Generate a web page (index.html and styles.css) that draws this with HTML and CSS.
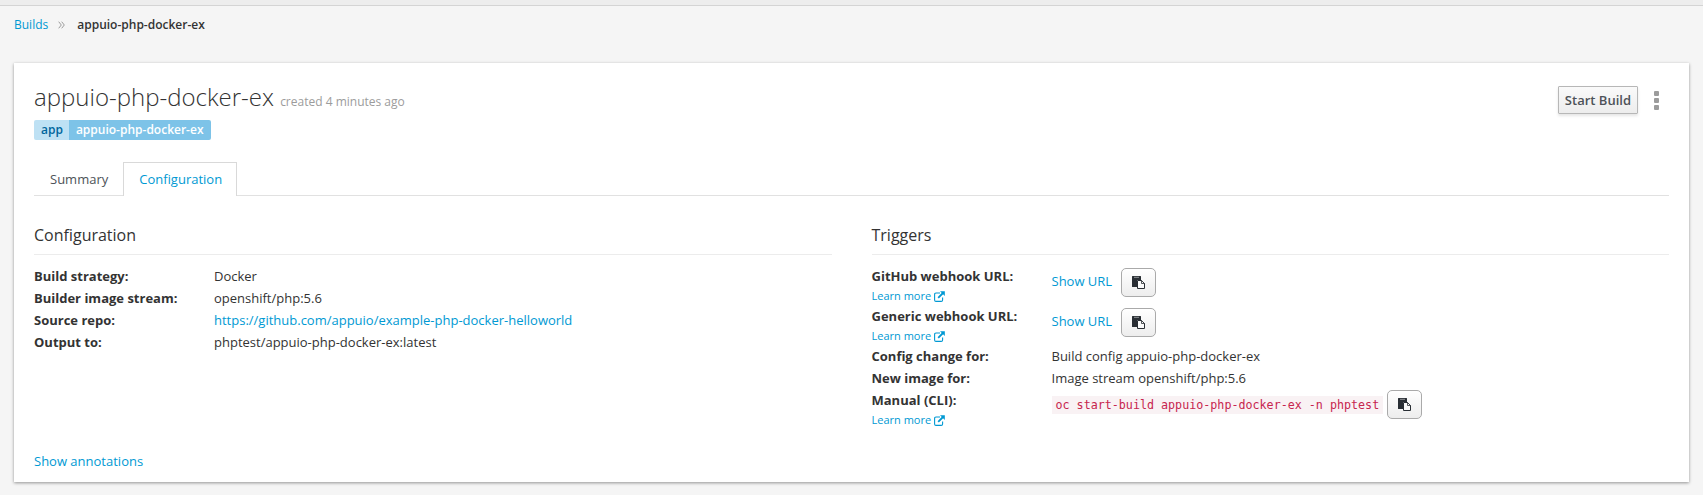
FILE: index.html
```html
<!DOCTYPE html>
<html lang="en">
<head>
<meta charset="utf-8">
<title>appuio-php-docker-ex</title>
<link rel="stylesheet" href="styles.css">
</head>
<body>
<svg class="sprite" aria-hidden="true">
  <symbol id="external" viewBox="0 0 11 11"><path d="M6 2H2Q.6 2 .6 3.400V9Q.6 10.400 2 10.400H7.200Q8.600 10.400 8.600 9V6.500" fill="none" stroke="currentColor" stroke-width="1.100"/><path d="M4.200 6.800 9 2" stroke="currentColor" stroke-width="1.800"/><path d="M6 .2H10.800V5Z" fill="currentColor"/></symbol>
  <symbol id="paste" viewBox="0 0 13 13"><path fill="currentColor" d="M.5 0H8.500Q9 0 9 .5V4H5V11H.5Q0 11 0 10.500V.5Q0 0 .5 0Z"/><path d="M2 1.300H7" stroke="#fff" stroke-width=".5"/><path d="M5.500 4.500H9.500L12.500 7.500V12.500H5.500Z" fill="#fafafa" stroke="currentColor"/><path d="M9.500 4.500V7.500H12.500Z" fill="#fafafa" stroke="currentColor" stroke-width=".8"/></symbol>
</svg>
<div class="topbar"></div>
<nav class="breadcrumb" aria-label="Breadcrumb">
  <a href="#">Builds</a>
  <svg class="chevrons" viewBox="0 0 7 8" aria-hidden="true"><path d="M.7.7 3.300 4 .7 7.300M3.700.7 6.300 4 3.700 7.300"/></svg>
  <strong>appuio-php-docker-ex</strong>
</nav>
<main class="card">
  <header class="header">
    <div>
      <h1>appuio-php-docker-ex <small>created 4 minutes ago</small></h1>
      <div class="label"><span class="label-key">app</span><span class="label-value">appuio-php-docker-ex</span></div>
    </div>
    <div class="actions">
      <button class="start" type="button">Start Build</button>
      <button class="kebab" type="button" aria-label="More actions"><svg viewBox="0 0 5 19"><rect width="5" height="5" rx="1"/><rect y="7" width="5" height="5" rx="1"/><rect y="14" width="5" height="5" rx="1"/></svg></button>
    </div>
  </header>
  <nav class="tabs" aria-label="Build views">
    <a class="tab" href="#">Summary</a>
    <a class="tab active" href="#" aria-current="page">Configuration</a>
  </nav>
  <div class="columns">
    <section>
      <h2>Configuration</h2>
      <dl>
        <dt>Build strategy:</dt><dd>Docker</dd>
        <dt>Builder image stream:</dt><dd>openshift/php:5.6</dd>
        <dt>Source repo:</dt><dd><a href="#">https://github.com/appuio/example-php-docker-helloworld</a></dd>
        <dt>Output to:</dt><dd>phptest/appuio-php-docker-ex:latest</dd>
      </dl>
    </section>
    <section>
      <h2>Triggers</h2>
      <dl>
        <dt>GitHub webhook URL: <a class="learn" href="#">Learn more <svg><use href="#external"/></svg></a></dt>
        <dd class="url"><a href="#">Show URL</a><button class="copy" type="button" aria-label="Copy GitHub URL"><svg><use href="#paste"/></svg></button></dd>
        <dt>Generic webhook URL: <a class="learn" href="#">Learn more <svg><use href="#external"/></svg></a></dt>
        <dd class="url"><a href="#">Show URL</a><button class="copy" type="button" aria-label="Copy generic URL"><svg><use href="#paste"/></svg></button></dd>
        <dt>Config change for:</dt><dd>Build config appuio-php-docker-ex</dd>
        <dt>New image for:</dt><dd>Image stream openshift/php:5.6</dd>
        <dt>Manual (CLI): <a class="learn" href="#">Learn more <svg><use href="#external"/></svg></a></dt>
        <dd class="command"><code>oc start-build appuio-php-docker-ex -n phptest</code><button class="copy" type="button" aria-label="Copy command"><svg><use href="#paste"/></svg></button></dd>
      </dl>
    </section>
  </div>
  <a class="annotations" href="#">Show annotations</a>
</main>
</body>
</html>
```
FILE: styles.css
```css
* { box-sizing: border-box; }
body { margin: 0; background: #f5f5f5; color: #333; font: 13px/22px "Open Sans", sans-serif; }
a { color: #0099d3; text-decoration: none; }
button { padding: 0; font: inherit; cursor: pointer; }
.sprite { display: none; }
.topbar { height: 6px; background: #ededed; border-bottom: 1px solid #d4d4d4; }
.breadcrumb { display: flex; align-items: center; padding: 8px 14px 0; font-size: 12px; }
.breadcrumb strong { font-weight: 600; }
.chevrons { width: 7px; height: 8px; margin: 0 12px 0 10px; fill: none; stroke: #9c9c9c; }
.card { margin: 27px 14px 12px; padding: 20px 20px 10px; background: #fff; box-shadow: 0 1px 3px rgba(0, 0, 0, .4); }
.header { display: flex; justify-content: space-between; align-items: flex-start; }
h1 { margin: 0; font-size: 24px; font-weight: 300; line-height: 28px; }
h1 small { color: #9c9c9c; font-size: 12px; font-weight: 400; }
.label { display: flex; width: max-content; margin-top: 4px; border-radius: 2px; overflow: hidden; font-size: 12px; font-weight: 600; line-height: 20px; }
.label-key { padding: 0 6px 0 7px; background: #bee1f4; color: #00659c; }
.label-value { padding: 0 7px; background: #7dc3e8; color: #fff; }
.actions { display: flex; align-items: center; gap: 16px; padding: 3px 10px 0 0; }
.start { height: 28px; padding: 0 6px; border: 1px solid #b7b7b7; border-radius: 1px; background: linear-gradient(#fafafa, #ededed); box-shadow: 0 2px 3px rgba(0, 0, 0, .1); color: #4d5258; font-weight: 600; }
.kebab { display: flex; border: 0; background: none; }
.kebab svg { width: 5px; height: 19px; fill: #9c9c9c; }
.tabs { display: flex; margin-top: 22px; border-bottom: 1px solid #e1e1e1; }
.tab { margin-bottom: -1px; padding: 5px 14px 6px 15px; border: 1px solid transparent; border-bottom: 0; color: #4d5258; }
.tab.active { background: #fff; border-color: #d9d9d9; color: #0099d3; }
.columns { display: grid; grid-template-columns: 1fr 1fr; gap: 40px; margin-top: 28px; }
h2 { margin: 0 0 10px; padding-bottom: 8px; border-bottom: 1px solid #ececec; font-size: 16px; font-weight: 400; line-height: 22px; }
dl { display: grid; grid-template-columns: 180px 1fr; margin: 0; }
dt { font-weight: 700; }
dd { margin: 0; }
.learn { display: flex; align-items: center; gap: 3px; font-size: 11px; font-weight: 400; line-height: 18px; }
.learn svg { width: 11px; height: 11px; }
.url { display: flex; align-items: center; gap: 9px; padding-bottom: 8px; }
.url .copy { margin-top: 2px; }
.command { display: flex; align-items: center; align-self: start; gap: 4px; padding-top: 1px; }
.copy { display: grid; place-items: center; width: 35px; height: 29px; border: 1px solid #aaa; border-radius: 5px; background: linear-gradient(#fff, #ededed); color: #292e34; }
.copy svg { width: 13px; height: 13px; }
code { padding: 0 4px; background: #f9f2f4; color: #c7254e; font: 90%/18px "DejaVu Sans Mono", monospace; }
.annotations { display: block; width: max-content; margin-top: 21px; }
@media (max-width: 900px) { .columns { grid-template-columns: 1fr; } }
```
